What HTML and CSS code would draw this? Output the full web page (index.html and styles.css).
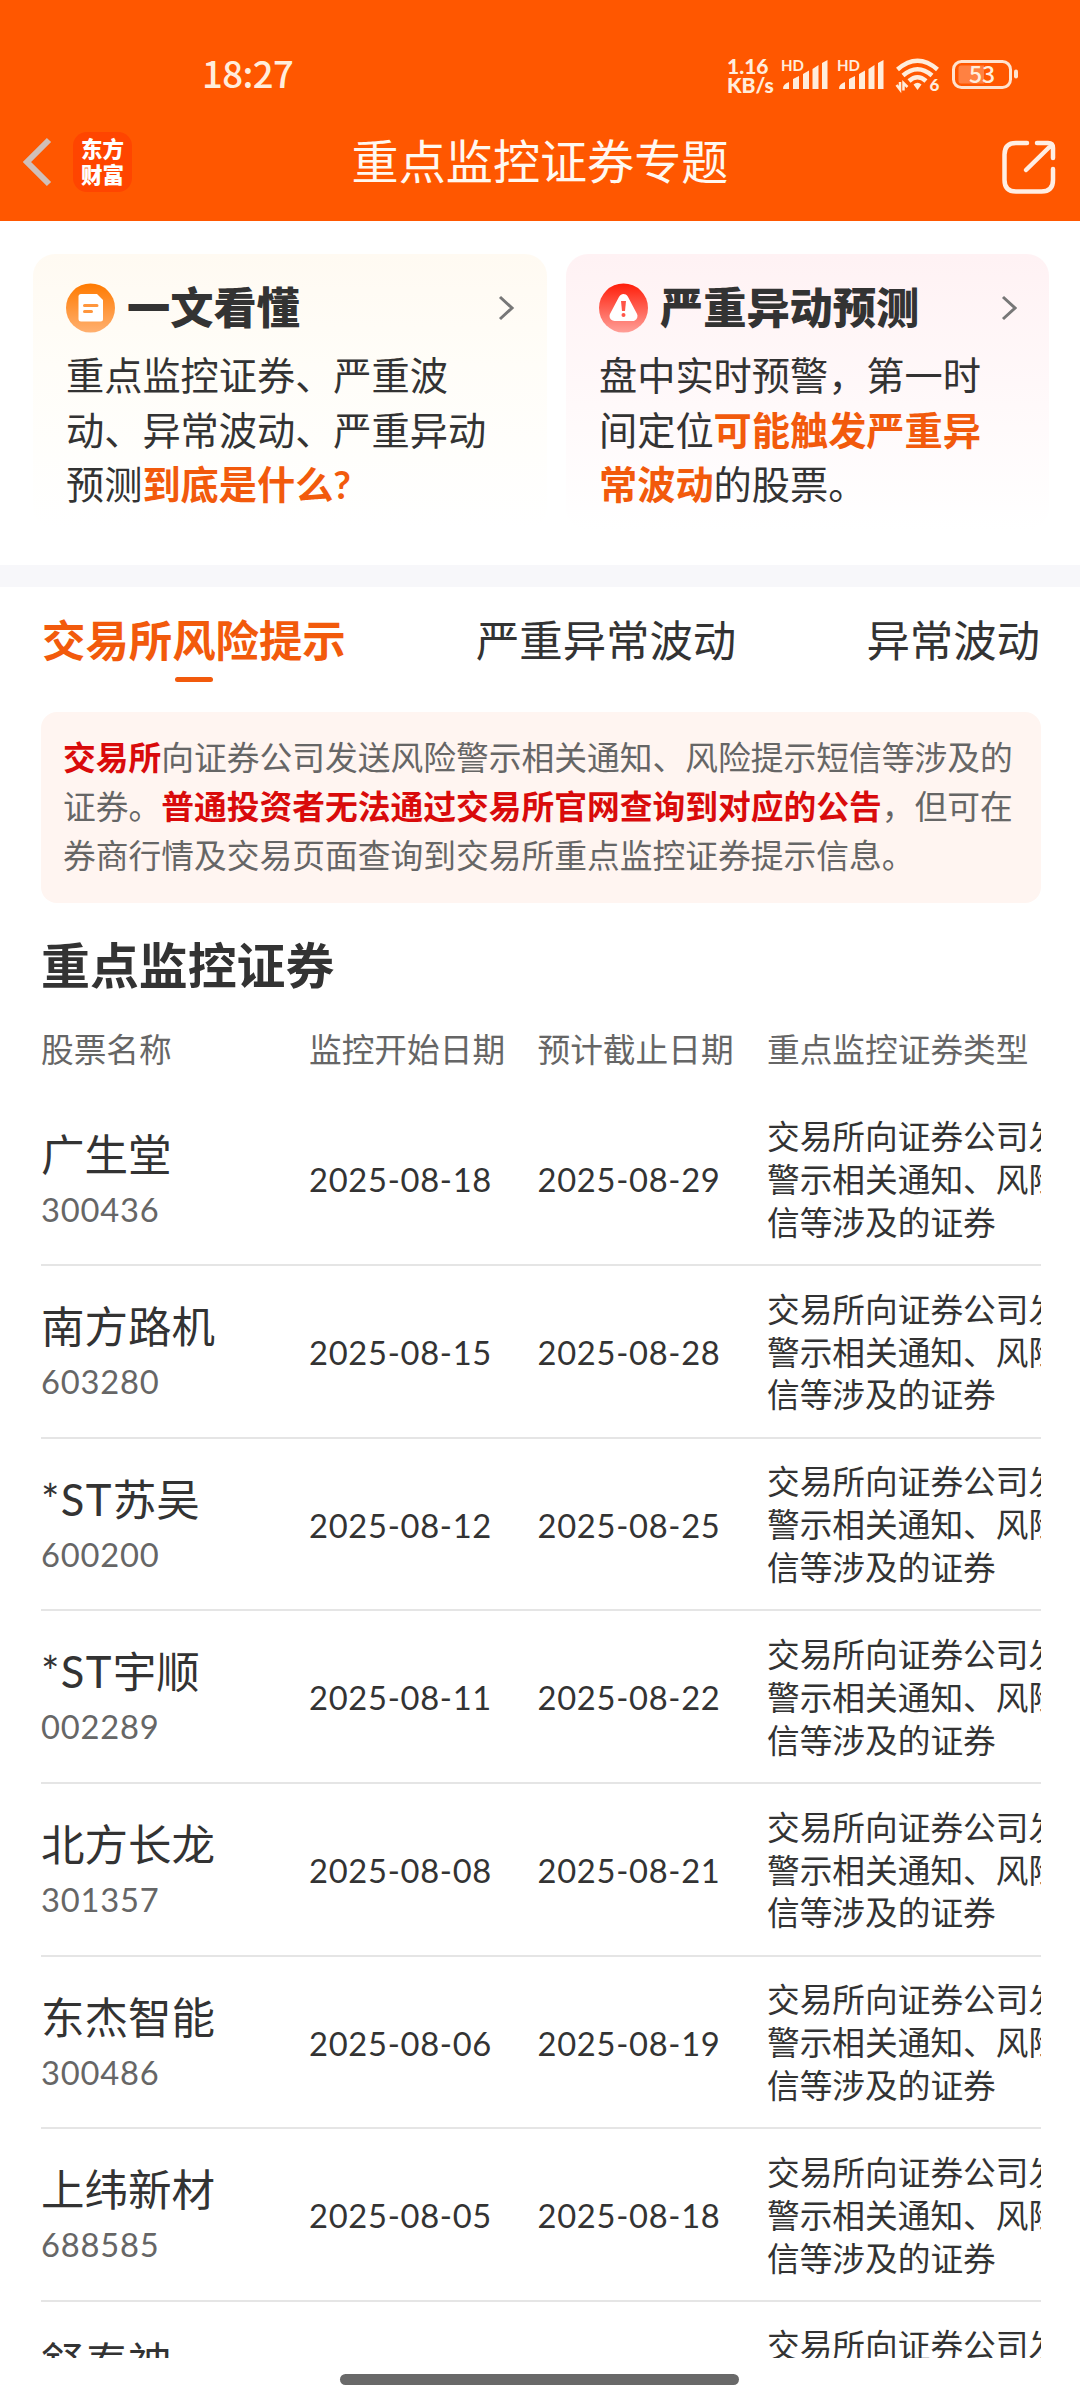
FILE: index.html
```html
<!DOCTYPE html>
<html lang="zh-CN">
<head>
    <meta charset="UTF-8">
    <meta name="viewport" content="width=device-width, initial-scale=1.0">
    <title>重点监控证券专题</title>
    <link rel="stylesheet" href="styles.css">
</head>
<body>

    <header class="header">
        <div class="status-bar">
            <span class="clock">18:27</span>
            <div class="status-icons">
                <div class="speed"><span class="rate">1.16</span><span>KB/s</span></div>
                <svg class="signal" width="48" height="34" viewBox="0 0 48 34">
                    <text x="0" y="13">HD</text>
                    <path d="M2 30.500Q2 26 8 24V31H2.500ZM12 21L18 18V31H12ZM22 16L28 12.500V31H22ZM31.500 11L37.500 7V31H31.500ZM41 5L46.500 2V31H41Z"/>
                </svg>
                <svg class="signal" width="48" height="34" viewBox="0 0 48 34">
                    <text x="0" y="13">HD</text>
                    <path d="M2 30.500Q2 26 8 24V31H2.500ZM12 21L18 18V31H12ZM22 16L28 12.500V31H22ZM31.500 11L37.500 7V31H31.500ZM41 5L46.500 2V31H41Z"/>
                </svg>
                <svg class="wifi" width="48" height="38" viewBox="0 0 48 38">
                    <g fill="none" stroke="#ffeddc" stroke-width="4.500">
                        <path d="M2.500 13.500Q22.500 -4 42.500 13.500"/>
                        <path d="M8 19.500Q22.500 7 37 19.500"/>
                        <path d="M14 25Q22.500 17.500 31 25"/>
                    </g>
                    <path d="M18.500 28.500Q22.500 25 26.500 28.500L22.500 34Z" fill="#ffeddc"/>
                    <path d="M1.500 29L5 33.500V26M8.500 34.500V27L12.500 31" fill="none" stroke="#ffeddc" stroke-width="2.500"/>
                    <text x="34.500" y="35">6</text>
                </svg>
                <svg class="battery" width="68" height="32" viewBox="0 0 68 32">
                    <rect x="2.500" y="2.500" width="57" height="26" rx="8" fill="none" stroke="#ffe3cf" stroke-width="3"/>
                    <path d="M10 6.500H33V24.500H10Q7.500 24.500 7.500 22V9Q7.500 6.500 10 6.500Z" fill="#ff8142"/>
                    <rect x="63" y="10.500" width="4" height="9" rx="2" fill="#ffe3cf"/>
                    <text x="31" y="24" text-anchor="middle">53</text>
                </svg>
            </div>
        </div>
        <div class="nav-bar">
            <div class="nav-left">
                <svg class="back" width="32" height="52" viewBox="0 0 32 52">
                    <path d="M28 4L6 26L28 48" fill="none" stroke="#d0bfb8" stroke-width="6"/>
                </svg>
                <div class="logo"><span>东方</span><span>财富</span></div>
            </div>
            <h1>重点监控证券专题</h1>
            <svg class="share" width="56" height="56" viewBox="0 0 56 56">
                <g fill="none" stroke="#ffeee4" stroke-width="4.500" stroke-linecap="round" stroke-linejoin="round">
                    <path d="M26 4H15Q3.500 4 3.500 15.500V41Q3.500 52.500 15 52.500H40.500Q52 52.500 52 41V30"/>
                    <path d="M36 4H47Q52 4 52 9V19M50.500 6L25 31"/>
                </g>
            </svg>
        </div>
    </header>

    <section class="cards">
        <div class="card guide">
            <div class="card-title">
                <svg width="50" height="50" viewBox="0 0 50 50">
                    <defs>
                        <linearGradient id="orange" x1="0" y1="0" x2="0" y2="1">
                            <stop offset="0" stop-color="#ff7a00"/>
                            <stop offset="1" stop-color="#ffb070"/>
                        </linearGradient>
                    </defs>
                    <circle cx="24.500" cy="25" r="24.500" fill="url(#orange)"/>
                    <path d="M15 11H31L37 17V36Q37 38.500 34.500 38.500H15Q12.500 38.500 12.500 36V13.500Q12.500 11 15 11Z" fill="#fff"/>
                    <path d="M18.500 22.500H31M18.500 28.500H25.500" stroke="#ff963c" stroke-width="3" stroke-linecap="round"/>
                </svg>
                <h2>一文看懂</h2>
                <svg class="arrow" width="18" height="26" viewBox="0 0 18 26">
                    <path d="M3 2L15 13L3 24" fill="none" stroke="#777" stroke-width="3"/>
                </svg>
            </div>
            <p>重点监控证券、严重波<br>动、异常波动、严重异动<br>预测<b>到底是什么?</b></p>
        </div>
        <div class="card forecast">
            <div class="card-title">
                <svg width="50" height="50" viewBox="0 0 50 50">
                    <defs>
                        <linearGradient id="red" x1="0" y1="0" x2="0" y2="1">
                            <stop offset="0" stop-color="#ff1e0a"/>
                            <stop offset="1" stop-color="#ff9f98"/>
                        </linearGradient>
                    </defs>
                    <circle cx="24.500" cy="25" r="24.500" fill="url(#red)"/>
                    <path d="M24.500 16L33.500 33H15.500Z" fill="#fff" stroke="#fff" stroke-width="10" stroke-linejoin="round"/>
                    <path d="M22 18H27L26 28H23Z" fill="#ff5548"/>
                    <circle cx="24.500" cy="32" r="2" fill="#ff5548"/>
                </svg>
                <h2>严重异动预测</h2>
                <svg class="arrow" width="18" height="26" viewBox="0 0 18 26">
                    <path d="M4 2L16 13L4 24" fill="none" stroke="#777" stroke-width="3"/>
                </svg>
            </div>
            <p>盘中实时预警，第一时<br>间定位<b>可能触发严重异<br>常波动</b>的股票。</p>
        </div>
    </section>

    <nav class="tabs">
        <a class="active">交易所风险提示</a>
        <a>严重异常波动</a>
        <a>异常波动</a>
    </nav>

    <div class="notice">
        <b>交易所</b>向证券公司发送风险警示相关通知、风险提示短信等涉及的<br>证券。<b>普通投资者无法通过交易所官网查询到对应的公告</b>，但可在<br>券商行情及交易页面查询到交易所重点监控证券提示信息。
    </div>

    <main class="stocks">
        <h2>重点监控证券</h2>
        <div class="row head">
            <span>股票名称</span>
            <span>监控开始日期</span>
            <span>预计截止日期</span>
            <span>重点监控证券类型</span>
        </div>
        <div class="row">
            <div class="stock"><span class="name">广生堂</span><span class="code">300436</span></div>
            <span class="date">2025-08-18</span>
            <span class="date">2025-08-29</span>
            <span class="type">交易所向证券公司发送风险警示相关通知、风险提示短信等涉及的证券</span>
        </div>
        <div class="row">
            <div class="stock"><span class="name">南方路机</span><span class="code">603280</span></div>
            <span class="date">2025-08-15</span>
            <span class="date">2025-08-28</span>
            <span class="type">交易所向证券公司发送风险警示相关通知、风险提示短信等涉及的证券</span>
        </div>
        <div class="row">
            <div class="stock"><span class="name"><i>*ST</i>苏吴</span><span class="code">600200</span></div>
            <span class="date">2025-08-12</span>
            <span class="date">2025-08-25</span>
            <span class="type">交易所向证券公司发送风险警示相关通知、风险提示短信等涉及的证券</span>
        </div>
        <div class="row">
            <div class="stock"><span class="name"><i>*ST</i>宇顺</span><span class="code">002289</span></div>
            <span class="date">2025-08-11</span>
            <span class="date">2025-08-22</span>
            <span class="type">交易所向证券公司发送风险警示相关通知、风险提示短信等涉及的证券</span>
        </div>
        <div class="row">
            <div class="stock"><span class="name">北方长龙</span><span class="code">301357</span></div>
            <span class="date">2025-08-08</span>
            <span class="date">2025-08-21</span>
            <span class="type">交易所向证券公司发送风险警示相关通知、风险提示短信等涉及的证券</span>
        </div>
        <div class="row">
            <div class="stock"><span class="name">东杰智能</span><span class="code">300486</span></div>
            <span class="date">2025-08-06</span>
            <span class="date">2025-08-19</span>
            <span class="type">交易所向证券公司发送风险警示相关通知、风险提示短信等涉及的证券</span>
        </div>
        <div class="row">
            <div class="stock"><span class="name">上纬新材</span><span class="code">688585</span></div>
            <span class="date">2025-08-05</span>
            <span class="date">2025-08-18</span>
            <span class="type">交易所向证券公司发送风险警示相关通知、风险提示短信等涉及的证券</span>
        </div>
        <div class="row">
            <div class="stock"><span class="name">舒泰神</span></div>
            <span></span>
            <span></span>
            <span class="type">交易所向证券公司发送风险警示相关通知、风险提示短信等涉及的证券</span>
        </div>
    </main>

    <footer class="home-bar"><span></span></footer>

</body>
</html>
```

FILE: styles.css
```css
:root {
    --primary-color: #ff5700;
    --accent-color: #f25a0c;
    --alert-color: #d90b0b;
    --text-color: #333;
    --light-text-color: #666;
    --border-color: #e5e5e5;
    --status-color: #ffeddc;
    --font-family: Lato, "Noto Sans CJK SC", sans-serif;
    --font-family-status: "Noto Sans CJK SC", sans-serif;
}
* {
    box-sizing: border-box;
}
body {
    margin: 0;
    height: 2400px;
    display: flex;
    flex-direction: column;
    overflow: hidden;
    font-family: var(--font-family);
    background-color: #fff;
    color: var(--text-color);
}
h1, h2, p {
    margin: 0;
}
svg {
    display: block;
    flex: none;
}

/* --- HEADER --- */
.header {
    flex: none;
    height: 221px;
    background-color: var(--primary-color);
}
.status-bar {
    display: flex;
    align-items: center;
    justify-content: space-between;
    height: 105px;
    padding: 45px 61px 0 202px;
    color: var(--status-color);
}
.clock {
    padding-bottom: 4px;
    font-family: var(--font-family-status);
    font-size: 36.5px;
    line-height: 40px;
    font-weight: 500;
    letter-spacing: -0.6px;
}
.status-icons {
    display: flex;
    align-items: center;
}
.speed {
    display: flex;
    flex-direction: column;
    width: 54px;
    font-size: 21px;
    line-height: 19px;
    font-weight: 900;
}
.signal {
    margin-right: 8px;
    fill: var(--status-color);
    font-size: 15px;
    font-weight: 700;
}
.wifi {
    margin: 0 8px 0 2px;
    fill: var(--status-color);
    font-size: 17px;
    font-weight: 900;
}
.battery {
    fill: var(--status-color);
    font-family: var(--font-family-status);
    font-size: 23px;
    font-weight: 500;
}
.nav-bar {
    display: grid;
    grid-template-columns: 1fr auto 1fr;
    align-items: center;
    height: 114px;
    padding: 0 23px 0 21px;
}
.nav-left {
    display: flex;
    align-items: center;
    gap: 20px;
}
.logo {
    display: flex;
    flex-direction: column;
    align-items: center;
    justify-content: center;
    width: 59px;
    height: 60px;
    border-radius: 14px;
    background-color: #ff4500;
    color: #fff;
    font-size: 21.5px;
    line-height: 26px;
    font-weight: 900;
}
h1 {
    margin: -3px 0 0 2px;
    font-size: 47.1px;
    line-height: 60px;
    font-weight: 400;
    color: #fff8f0;
}
.share {
    justify-self: end;
    margin-top: 9px;
}

/* --- CARDS --- */
.cards {
    flex: none;
    display: grid;
    grid-template-columns: 514px 483px;
    gap: 19px;
    height: 366px;
    padding: 33px 0 0 33px;
    border-bottom: 22px solid #f7f7fa;
}
.card {
    height: 276px;
    padding: 29px 32px 0 33px;
    border-radius: 22px;
}
.guide {
    background: linear-gradient(#fffaf2, #fffdf8 40%, #fff);
}
.forecast {
    background: linear-gradient(#fff2f4, #fff9fa 55%, #fff);
}
.card-title {
    display: flex;
    align-items: center;
    height: 50px;
}
.card h2 {
    flex: 1;
    margin: -3px 0 0 11px;
    font-size: 43.2px;
    line-height: 50px;
    font-weight: 900;
}
.card p {
    margin-top: 15px;
    font-size: 38.2px;
    line-height: 54.6px;
    white-space: nowrap;
}
.card b {
    color: var(--accent-color);
}

/* --- TABS --- */
.tabs {
    flex: none;
    display: flex;
    justify-content: space-between;
    height: 125px;
    padding: 23px 40px 0 42px;
    font-size: 43.4px;
    line-height: 60px;
}
.tabs .active {
    color: var(--accent-color);
    font-weight: 700;
}
.tabs .active::after {
    content: "";
    display: block;
    width: 38px;
    height: 5px;
    margin: 7px auto 0;
    border-radius: 3px;
    background-color: var(--accent-color);
}

/* --- NOTICE --- */
.notice {
    flex: none;
    height: 191px;
    margin: 0 39px 0 41px;
    padding: 21px 22px;
    border-radius: 16px;
    background-color: #fff5f1;
    color: var(--light-text-color);
    font-size: 32.75px;
    line-height: 49px;
    white-space: nowrap;
}
.notice b {
    color: var(--alert-color);
}

/* --- STOCK LIST --- */
.stocks {
    flex: none;
    height: 1455px;
    margin: 0 39px 0 41px;
    overflow: hidden;
}
.stocks h2 {
    padding-top: 32px;
    font-size: 48.9px;
    line-height: 60px;
    font-weight: 700;
}
.row {
    display: grid;
    grid-template-columns: 268px 228.500px 229.500px 400px;
    align-items: center;
    height: 172.670px;
    border-bottom: 2px solid var(--border-color);
    font-size: 32.7px;
}
.row.head {
    height: 98.5px;
    padding-top: 6px;
    border-bottom: none;
    color: var(--light-text-color);
}
.stock {
    display: flex;
    flex-direction: column;
    align-self: start;
    padding-top: 32px;
}
.name {
    font-size: 43.5px;
    line-height: 56px;
}
.name i {
    font-style: normal;
    letter-spacing: 1.3px;
}
.code {
    color: var(--light-text-color);
    line-height: 55px;
    letter-spacing: 0.8px;
}
.date {
    padding-top: 2px;
    letter-spacing: 0.7px;
}
.type {
    padding-top: 3px;
    line-height: 42.8px;
}

/* --- HOME INDICATOR --- */
.home-bar {
    padding-top: 16px;
}
.home-bar span {
    display: block;
    width: 399px;
    height: 11px;
    margin: 0 0 0 340px;
    border-radius: 6px;
    background-color: #696969;
}
```
